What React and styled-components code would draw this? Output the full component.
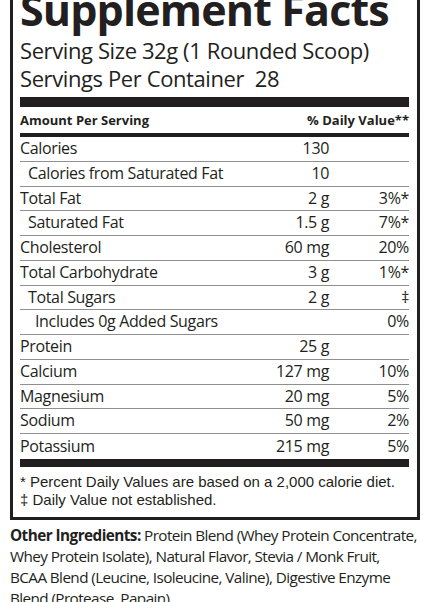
import React from "react";
import styled, { createGlobalStyle } from "styled-components";

const GlobalStyle = createGlobalStyle`
  html, body {
    margin: 0;
    padding: 0;
    background: #ffffff;
    overflow: hidden;
  }
  body {
    color: #231f20;
    font-family: "Open Sans", "Noto Sans", sans-serif;
  }
`;

const Page = styled.div`
  width: 410px;
  margin: -20px 0 0 10px;
`;

const Panel = styled.section`
  border: 3px solid #231f20;
  padding: 5px 8px 8px 7px;
`;

const Title = styled.h1`
  margin: 0 0 4px;
  font-size: 43px;
  line-height: 44px;
  font-weight: 700;
  letter-spacing: -0.85px;
  white-space: nowrap;
`;

const ServingLine = styled.div`
  font-size: 22px;
  line-height: 28px;
  letter-spacing: -0.4px;
  white-space: pre;
`;

const Bar = styled.div`
  height: ${(p) => p.$h}px;
  background: #231f20;
  margin-top: ${(p) => p.$top || 0}px;
`;

const HeaderRow = styled.div`
  display: flex;
  justify-content: space-between;
  font-size: 13px;
  line-height: 26px;
  height: 26px;
  font-weight: 700;
`;

const Row = styled.div`
  display: grid;
  grid-template-columns: minmax(0, 1fr) 120px 78px;
  box-sizing: border-box;
  height: 24.75px;
  line-height: 23.75px;
  font-size: 16px;
  letter-spacing: -0.35px;
  border-bottom: 1px solid #8f8f8f;

  &:last-child {
    border-bottom: none;
    line-height: 24.75px;
  }
`;

const Label = styled.span`
  padding-left: ${(p) => p.$indent || 0}px;
  white-space: nowrap;
`;

const Num = styled.span`
  text-align: right;
  white-space: nowrap;
  padding-right: ${(p) => p.$pr || 0}px;
`;

const Notes = styled.div`
  padding-top: 6px;
  font-family: "Liberation Sans", Arial, sans-serif;
  font-size: 15px;
  line-height: 18px;
`;

const Ingredients = styled.p`
  margin: 5px 0 0;
  font-size: 15.3px;
  line-height: 21.2px;
  letter-spacing: -0.6px;
  white-space: nowrap;

  b {
    font-weight: 700;
    letter-spacing: -0.55px;
  }
`;

const rows = [
  { label: "Calories", amount: "130", dv: "" },
  { label: "Calories from Saturated Fat", amount: "10", dv: "", indent: 8 },
  { label: "Total Fat", amount: "2 g", dv: "3%*" },
  { label: "Saturated Fat", amount: "1.5 g", dv: "7%*", indent: 8 },
  { label: "Cholesterol", amount: "60 mg", dv: "20%" },
  { label: "Total Carbohydrate", amount: "3 g", dv: "1%*" },
  { label: "Total Sugars", amount: "2 g", dv: "‡", indent: 8 },
  { label: "Includes 0g Added Sugars", amount: "", dv: "0%", indent: 15 },
  { label: "Protein", amount: "25 g", dv: "" },
  { label: "Calcium", amount: "127 mg", dv: "10%" },
  { label: "Magnesium", amount: "20 mg", dv: "5%" },
  { label: "Sodium", amount: "50 mg", dv: "2%" },
  { label: "Potassium", amount: "215 mg", dv: "5%" },
];

export default function App() {
  return (
    <>
      <GlobalStyle />
      <Page>
        <Panel>
          <Title>Supplement Facts</Title>
          <ServingLine>Serving Size 32g (1 Rounded Scoop)</ServingLine>
          <ServingLine>Servings Per Container  28</ServingLine>
          <Bar $h={10} $top={5} />
          <HeaderRow>
            <span>Amount Per Serving</span>
            <span>% Daily Value**</span>
          </HeaderRow>
          <Bar $h={4} />
          <div>
            {rows.map((r) => (
              <Row key={r.label}>
                <Label $indent={r.indent}>{r.label}</Label>
                <Num $pr={2}>{r.amount}</Num>
                <Num>{r.dv}</Num>
              </Row>
            ))}
          </div>
          <Bar $h={8} />
          <Notes>
            <div>* Percent Daily Values are based on a 2,000 calorie diet.</div>
            <div>‡ Daily Value not established.</div>
          </Notes>
        </Panel>
        <Ingredients>
          <b>Other Ingredients:</b> Protein Blend (Whey Protein Concentrate,
          <br />
          Whey Protein Isolate), Natural Flavor, Stevia / Monk Fruit,
          <br />
          BCAA Blend (Leucine, Isoleucine, Valine), Digestive Enzyme
          <br />
          Blend (Protease, Papain).
        </Ingredients>
      </Page>
    </>
  );
}
